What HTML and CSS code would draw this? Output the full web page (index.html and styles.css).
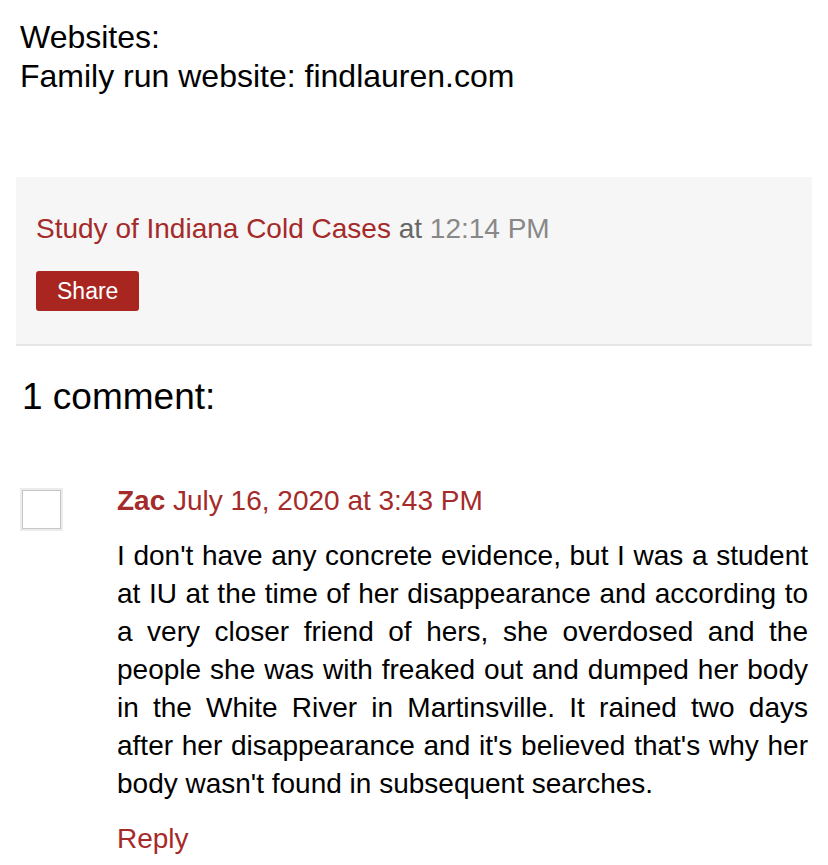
FILE: index.html
```html
<!DOCTYPE html>
<html>
<head>
<meta charset="utf-8">
<link rel="stylesheet" href="styles.css">
</head>
<body>
<div class="post-body">
  <div>Websites:</div>
  <div>Family run website: findlauren.com</div>
</div>
<div class="post-footer">
  <div class="byline"><a class="author">Study of Indiana Cold Cases</a> <span class="at">at</span> <span class="time">12:14 PM</span></div>
  <div class="share-row"><span class="share">Share</span></div>
</div>
<h4 class="comments-title">1 comment:</h4>
<div class="comment">
  <div class="avatar"></div>
  <div class="comment-main">
    <div class="comment-head"><span class="user">Zac</span> <span class="date">July 16, 2020 at 3:43 PM</span></div>
    <p class="comment-text">I don't have any concrete evidence, but I was a student at IU at the time of her disappearance and according to a very closer friend of hers, she overdosed and the people she was with freaked out and dumped her body in the White River in Martinsville. It rained two days after her disappearance and it's believed that's why her body wasn't found in subsequent searches.</p>
    <div class="reply">Reply</div>
  </div>
</div>
</body>
</html>
```
FILE: styles.css
```css
html, body {
  margin: 0;
  padding: 0;
  background: #fff;
  font-family: "Liberation Sans", Arial, sans-serif;
  color: #000;
}
.post-body {
  padding: 18px 20px 0 20px;
  font-size: 32px;
  line-height: 39px;
}
.post-footer {
  margin: 81px 16px 0 16px;
  background: #f6f6f6;
  border-bottom: 2px solid #e6e6e6;
  padding: 36px 20px 33px 20px;
}
.byline {
  font-size: 28px;
  line-height: 32px;
}
.author { color: #a52a2a; }
.at { color: #666; }
.time { color: #888; }
.share-row {
  margin-top: 26px;
  display: flex;
}
.share {
  display: inline-block;
  background: #a8261f;
  color: #fff;
  border-radius: 3px;
  font-size: 23px;
  line-height: 40px;
  padding: 0 21px;
}
.comments-title {
  margin: 30px 0 0 22px;
  font-size: 37px;
  font-weight: normal;
  line-height: 42px;
}
.comment {
  display: flex;
  margin-top: 70px;
  padding-left: 20px;
  padding-right: 20px;
}
.avatar {
  width: 37px;
  height: 37px;
  margin: 2px;
  border: 1px solid #c6c6c6;
  box-shadow: 0 0 0 2px #ececec;
  flex: none;
}
.comment-main {
  margin-left: 54px;
  flex: 1;
}
.comment-head {
  font-size: 28px;
  line-height: 26px;
  color: #a52a2a;
}
.user { font-weight: bold; }
.comment-text {
  margin: 23px 0 0 0;
  font-size: 28px;
  line-height: 38px;
  text-align: justify;
}
.reply {
  margin-top: 20px;
  font-size: 28px;
  color: #a52a2a;
  line-height: 32px;
}
```
